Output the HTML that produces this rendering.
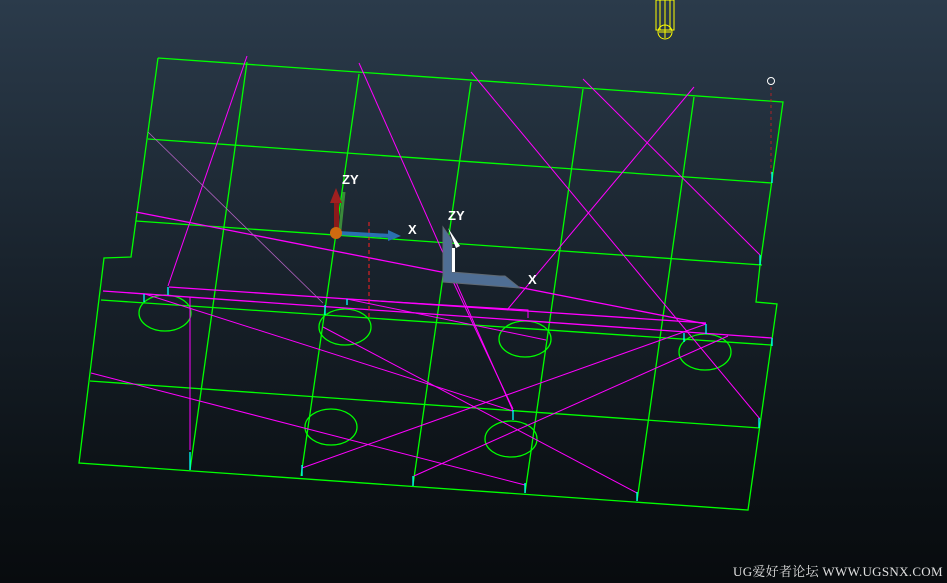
<!DOCTYPE html>
<html><head><meta charset="utf-8"><style>
html,body{margin:0;padding:0;width:947px;height:583px;overflow:hidden;background:linear-gradient(#2b3b4b 0%,#19232d 45%,#0b1014 85%,#080b0e 100%);}
svg{position:absolute;left:0;top:0}
.wm{position:absolute;left:733px;top:561px;font:13px "Liberation Serif","Noto Serif CJK SC",serif;color:#e0e0e0;letter-spacing:0.3px;white-space:nowrap}
</style></head><body>
<svg width="947" height="583" viewBox="0 0 947 583">
<g fill="none" stroke="#00ff00" stroke-width="1.3">
<polyline points="158,58 783,102 760,265 756,302 777,304 748,510 79,463 104,258 131,257 158,58"/>
<line x1="148" y1="139" x2="772" y2="183"/>
<line x1="136" y1="221" x2="762" y2="265"/>
<line x1="101" y1="300" x2="771" y2="345"/>
<line x1="90" y1="381" x2="760" y2="428"/>
<line x1="247" y1="62" x2="190" y2="470"/>
<line x1="359" y1="74" x2="301" y2="476"/>
<line x1="471" y1="82" x2="413" y2="485"/>
<line x1="583" y1="89" x2="525" y2="493"/>
<line x1="694" y1="97" x2="637" y2="501"/>
<ellipse cx="165" cy="313" rx="26" ry="18"/>
<ellipse cx="345" cy="327" rx="26" ry="18"/>
<ellipse cx="525" cy="339" rx="26" ry="18"/>
<ellipse cx="705" cy="352" rx="26" ry="18"/>
<ellipse cx="331" cy="427" rx="26" ry="18"/>
<ellipse cx="511" cy="439" rx="26" ry="18"/>
</g>
<g fill="none" stroke="#ff00ff" stroke-width="1">
<line x1="247" y1="56" x2="168" y2="286"/>
<line x1="359" y1="63" x2="513" y2="411"/>
<line x1="471" y1="72" x2="760" y2="419"/>
<line x1="583" y1="79" x2="760" y2="255"/>
<line x1="694" y1="87" x2="507" y2="310"/>
<line x1="136" y1="212" x2="706" y2="324" stroke-width="1.3"/>
<line x1="103" y1="291" x2="772" y2="338" stroke-width="1.3"/>
<line x1="169" y1="287" x2="706" y2="323" stroke-width="1.3"/>
<line x1="145" y1="294" x2="513" y2="411"/>
<line x1="323" y1="327" x2="637" y2="493"/>
<line x1="91" y1="373" x2="525" y2="485"/>
<line x1="302" y1="468" x2="706" y2="324"/>
<line x1="414" y1="476" x2="728" y2="336"/>
<line x1="190" y1="297" x2="190" y2="450"/>
<line x1="450" y1="275" x2="513" y2="409"/>
<line x1="347" y1="299" x2="546" y2="340"/>
<polyline points="347,305 347,299 528,310 528,318"/>
</g>
<line x1="148" y1="132" x2="323" y2="303" stroke="#b060c0" stroke-width="0.8"/>
<line x1="369" y1="222" x2="369" y2="318" stroke="#ff2020" stroke-width="1" stroke-dasharray="4,3"/>
<line x1="771" y1="87" x2="771" y2="175" stroke="#cc2020" stroke-width="0.8" stroke-dasharray="3,3"/>
<circle cx="771" cy="81" r="3.5" fill="none" stroke="#fff" stroke-width="1"/>
<!-- yellow tool -->
<g stroke="#ffff00" fill="none" stroke-width="1">
<rect x="656" y="0" width="18" height="30"/>
<line x1="660" y1="0" x2="660" y2="30"/><line x1="665" y1="0" x2="665" y2="30"/><line x1="670" y1="0" x2="670" y2="30"/>
<circle cx="665" cy="32" r="7"/>
<line x1="659" y1="32" x2="671" y2="32"/><line x1="665" y1="26" x2="665" y2="38"/>
</g>
<!-- triad 1 -->
<line x1="340" y1="230" x2="344" y2="192" stroke="#3a8a3a" stroke-width="3"/>
<rect x="334" y="200" width="5" height="33" fill="#8b1a1a"/>
<polygon points="330,203 336,188 342,203" fill="#a02020"/>
<line x1="338" y1="233" x2="392" y2="236" stroke="#2a70b0" stroke-width="4"/>
<polygon points="388,230 401,236 388,241" fill="#2a70b0"/>
<circle cx="336" cy="233" r="6" fill="#d06a10"/>
<text x="342" y="184" fill="#fff" font-family="Liberation Sans" font-size="13" font-weight="bold">ZY</text>
<text x="408" y="234" fill="#fff" font-family="Liberation Sans" font-size="13" font-weight="bold">X</text>
<!-- triad 2 -->
<polygon points="443,227 452,240 452,272 500,276 505,276 520,288 443,282" fill="#4f6e94" stroke="#606a74" stroke-width="1"/>
<polygon points="448,228 460,246 456,248 452,238" fill="#fff"/>
<rect x="452" y="248" width="3" height="24" fill="#fff"/>
<text x="448" y="220" fill="#fff" font-family="Liberation Sans" font-size="13" font-weight="bold">ZY</text>
<text x="528" y="284" fill="#fff" font-family="Liberation Sans" font-size="13" font-weight="bold">X</text>
<g stroke="#00ffff" stroke-width="1.3">
<line x1="144" y1="294" x2="144" y2="302"/><line x1="168" y1="287" x2="168" y2="295"/>
<line x1="325" y1="305" x2="325" y2="315"/><line x1="347" y1="299" x2="347" y2="305"/>
<line x1="190" y1="452" x2="190" y2="470"/><line x1="302" y1="465" x2="302" y2="476"/>
<line x1="413" y1="476" x2="413" y2="486"/><line x1="525" y1="483" x2="525" y2="493"/>
<line x1="637" y1="492" x2="637" y2="501"/><line x1="760" y1="255" x2="760" y2="265"/>
<line x1="772" y1="172" x2="772" y2="183"/><line x1="759" y1="418" x2="759" y2="428"/>
<line x1="513" y1="410" x2="513" y2="420"/><line x1="706" y1="324" x2="706" y2="334"/>
<line x1="684" y1="333" x2="684" y2="342"/><line x1="772" y1="338" x2="772" y2="346"/>
</g>
</svg>
<div class="wm">UG爱好者论坛 WWW.UGSNX.COM</div>
</body></html>
